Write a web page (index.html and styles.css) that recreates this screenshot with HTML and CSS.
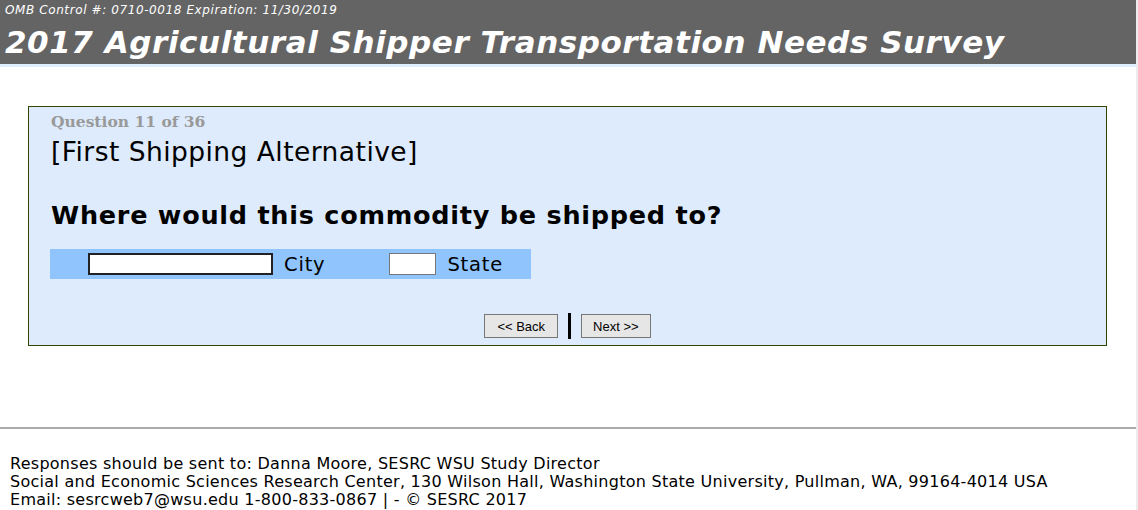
FILE: index.html
```html
<!DOCTYPE html>
<html>
<head>
<meta charset="utf-8">
<link rel="stylesheet" href="styles.css">
</head>
<body>
<div class="page">
  <header class="banner">
    <div class="omb">OMB Control #: 0710-0018 Expiration: 11/30/2019</div>
    <h1 class="title">2017 Agricultural Shipper Transportation Needs Survey</h1>
  </header>
  <div class="strip"></div>
  <main class="content">
    <section class="qbox">
      <div class="qnum">Question 11 of 36</div>
      <div class="alt">[First Shipping Alternative]</div>
      <div class="qtext">Where would this commodity be shipped to?</div>
      <div class="answer">
        <input class="city-input" type="text">
        <span class="lbl city-lbl">City</span>
        <input class="state-input" type="text">
        <span class="lbl">State</span>
      </div>
      <div class="nav">
        <button class="btn back">&lt;&lt; Back</button>
        <span class="sep"></span>
        <button class="btn">Next &gt;&gt;</button>
      </div>
    </section>
  </main>
  <footer class="foot">
    <div>Responses should be sent to: Danna Moore, SESRC WSU Study Director</div>
    <div>Social and Economic Sciences Research Center, 130 Wilson Hall, Washington State University, Pullman, WA, 99164-4014 USA</div>
    <div>Email: sesrcweb7@wsu.edu 1-800-833-0867 | - &copy; SESRC 2017</div>
  </footer>
</div>
</body>
</html>
```
FILE: styles.css
```css
html { background: #ececec; }
body { margin: 0; font-family: "DejaVu Sans", Verdana, sans-serif; color: #000; }
.page { width: 1136px; height: 510px; background: #fff; overflow: hidden; }
.banner { background: #646464; color: #fff; height: 64px; padding-left: 5px; box-sizing: border-box; }
.omb { font-size: 12px; font-style: italic; padding-top: 3px; line-height: 14px; height: 17px; letter-spacing: 0.6px; }
.title { margin: 0; font-size: 31px; font-weight: bold; font-style: italic; line-height: 44px; letter-spacing: 0.55px; }
.strip { height: 3px; background: #ddeeff; }
.content { padding: 39px 0 0 28px; height: 360px; box-sizing: border-box; }
.qbox { width: 1079px; height: 240px; box-sizing: border-box; border: 1px solid #334400; background: #ddebfc; padding: 5px 0 0 21px; display: flex; flex-direction: column; }
.qnum { font-family: "DejaVu Serif", Georgia, serif; font-weight: bold; color: #999; font-size: 15.5px; line-height: 20px; padding-left: 1px; }
.alt { font-size: 26.5px; line-height: 32px; margin-top: 4px; letter-spacing: 0.45px; padding-left: 1px; }
.qtext { font-size: 25.5px; font-weight: bold; line-height: 32px; margin-top: 31px; letter-spacing: 0.75px; padding-left: 1px; }
.answer { margin-top: 18px; width: 481px; height: 30px; background: #8fc4fc; display: flex; align-items: center; padding-left: 38px; box-sizing: border-box; }
.answer input { height: 22px; box-sizing: border-box; background: #fff; margin: 0; padding: 0; }
.city-input { width: 185px; border: 2px solid #222; }
.state-input { width: 47px; border: 1px solid #777; }
.lbl { font-size: 19.5px; margin-left: 11px; letter-spacing: 0.8px; }
.city-lbl { margin-right: 64px; }
.nav { display: flex; align-items: center; justify-content: center; margin: 34px 0 0 -21px; }
.btn { font-family: "Liberation Sans", Arial, sans-serif; font-size: 13px; height: 24px; border: 1px solid #777; background: #e6e6e6; padding: 0 11px; color: #000; }
.back { padding: 0 12px; }
.sep { width: 3px; height: 26px; background: #000; margin: 0 10px; }
.foot { border-top: 2px solid #ababab; padding: 26px 0 0 10px; font-size: 16px; line-height: 18px; letter-spacing: 0.27px; }
```
